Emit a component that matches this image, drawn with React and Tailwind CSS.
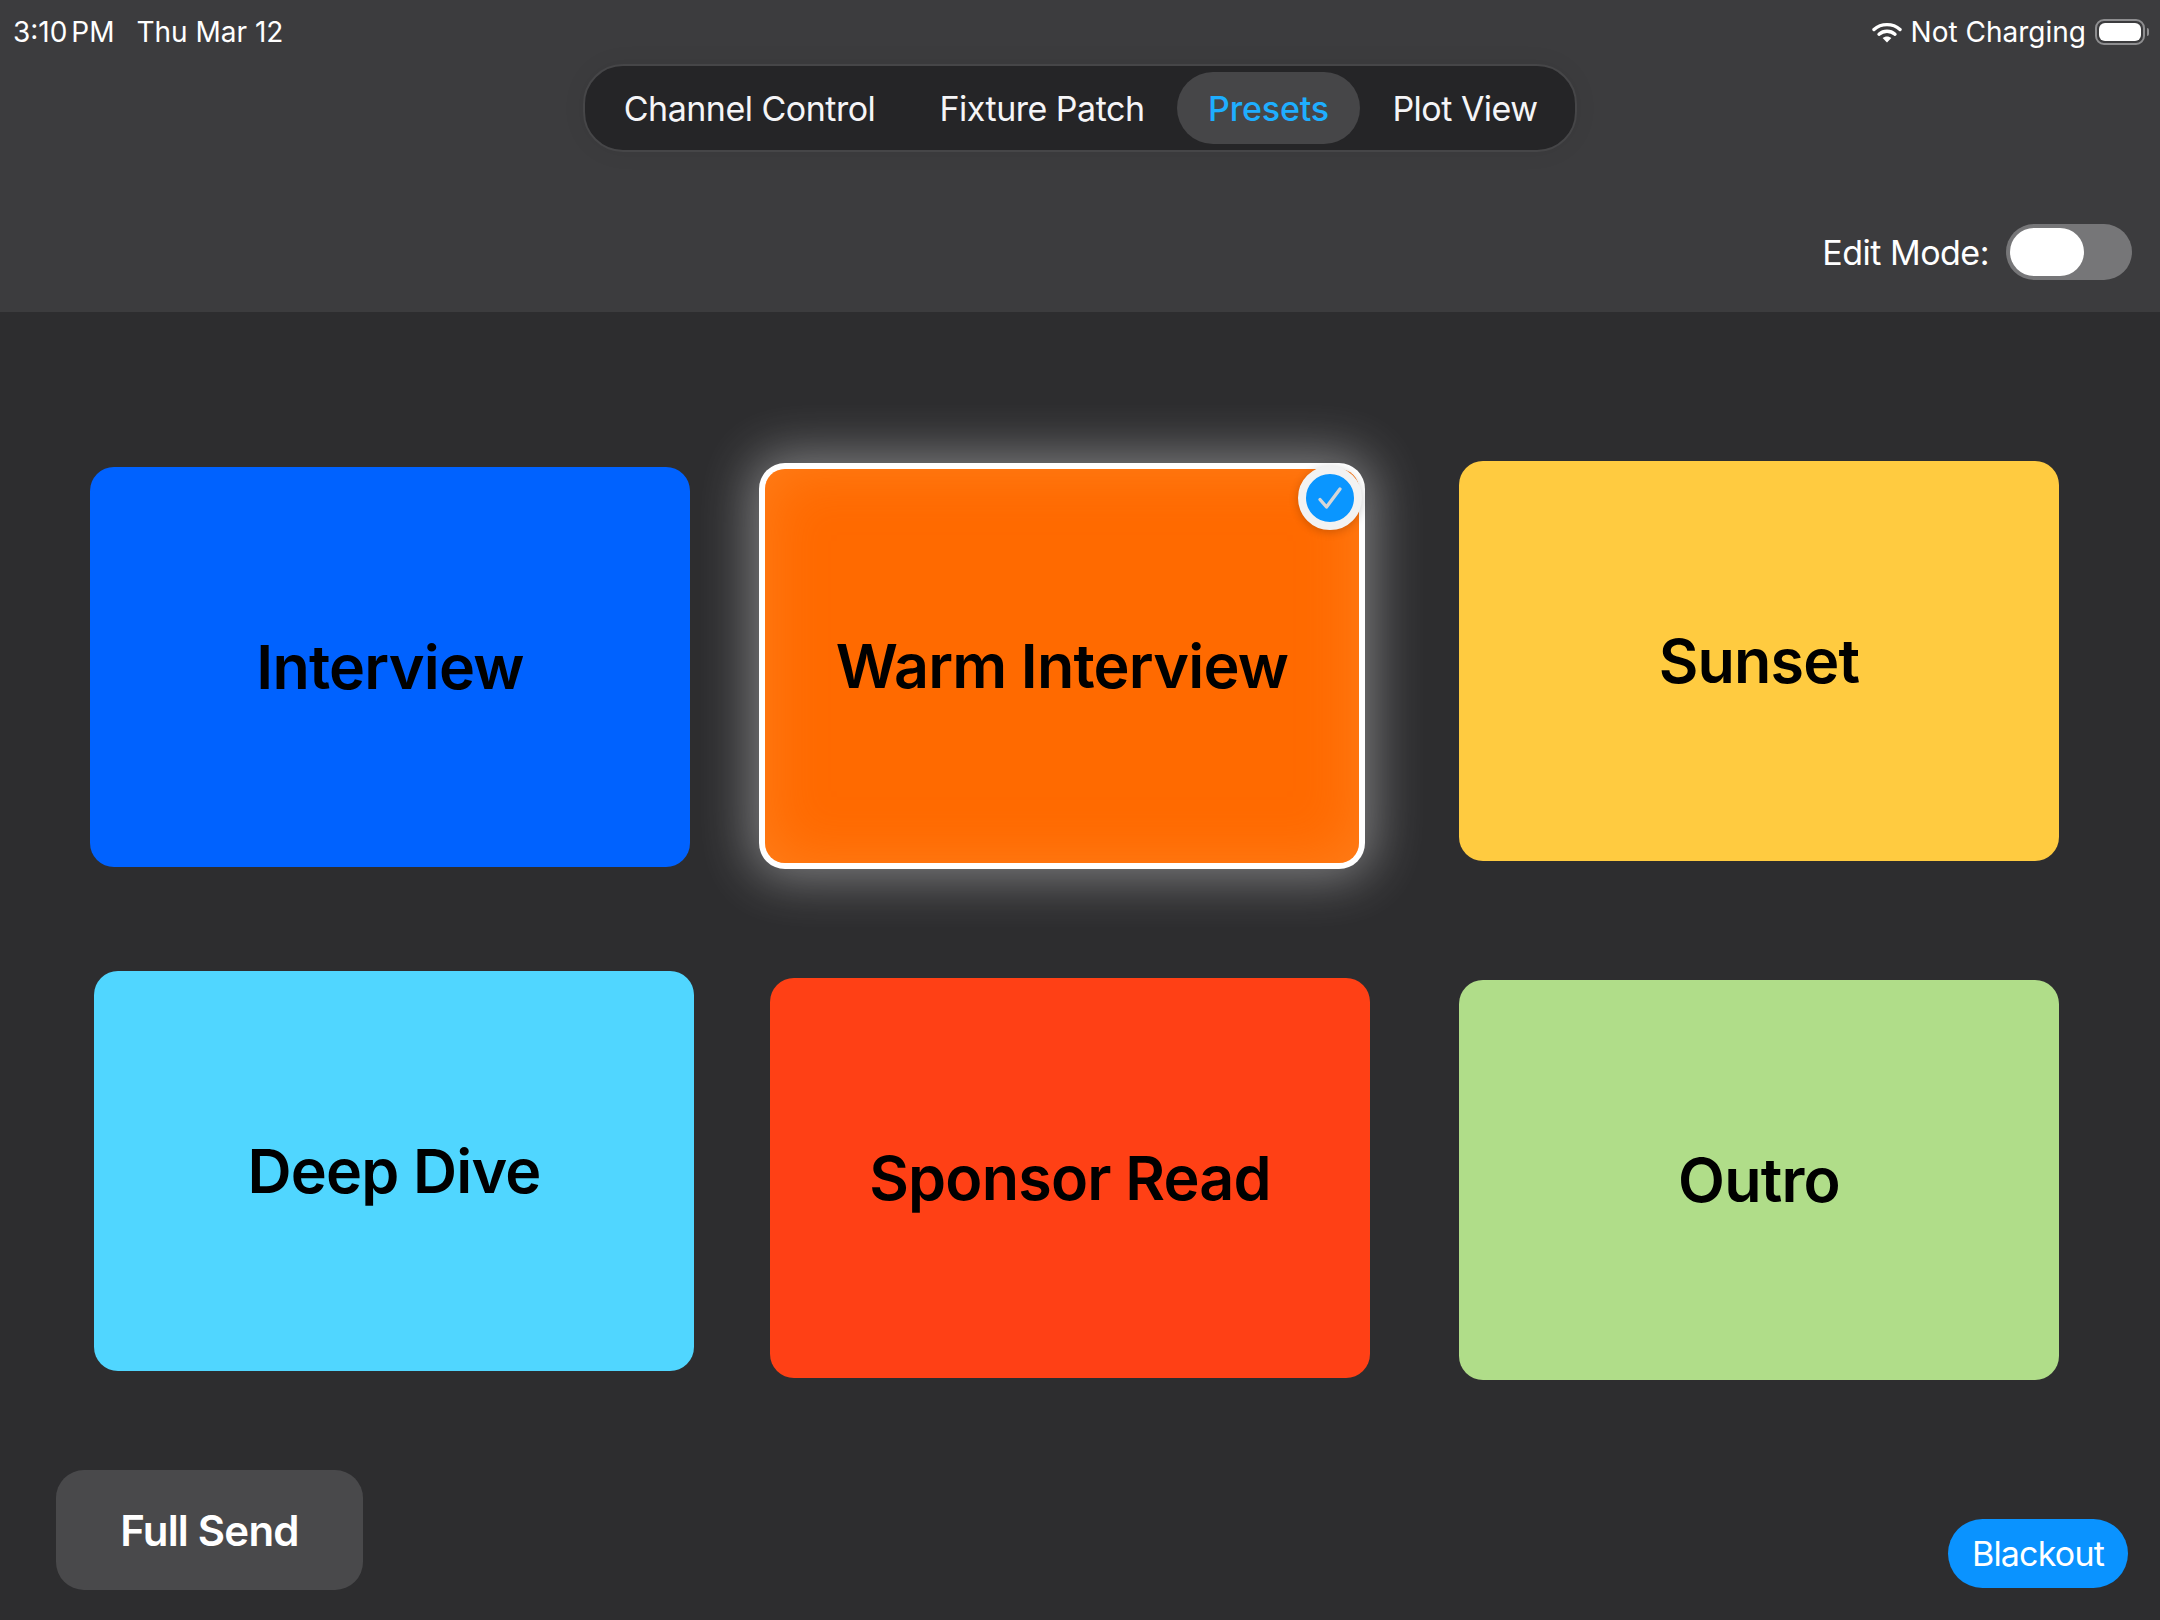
import React from "react";

const font = { fontFamily: '"Inter", "Liberation Sans", sans-serif' };

function Wifi() {
  return (
    <svg width="30" height="21" viewBox="0 0 30 21" fill="none" className="shrink-0">
      <path d="M2 7.5C9.2 1 20.8 1 28 7.5" stroke="white" strokeWidth="3.4" strokeLinecap="round" />
      <path d="M7 12.2C11.6 8.2 18.4 8.2 23 12.2" stroke="white" strokeWidth="3.4" strokeLinecap="round" />
      <path d="M10.6 16C13 13.9 17 13.9 19.4 16L15 20.6Z" fill="white" />
    </svg>
  );
}

function Battery() {
  return (
    <div className="flex items-center shrink-0">
      <div className="w-[50px] h-[26px] rounded-[9px] border-2 border-[#8e8e90] p-[2px]">
        <div className="w-full h-full rounded-[6px] bg-white" />
      </div>
      <div className="ml-[2px] w-[2px] h-[8px] rounded-r-full bg-[#8e8e90]" />
    </div>
  );
}

function Tab({ label, width, active }) {
  return (
    <div
      className={`flex items-center justify-center h-[72px] ${width} text-[34px] ${
        active ? "rounded-[36px] bg-[#464648] text-[#1eaeff] font-medium tracking-[-0.2px]" : "text-[#f5f5f7] tracking-[-0.5px]"
      }`}
    >
      {label}
    </div>
  );
}

function Preset({ label, color, offset }) {
  return (
    <div className={`flex items-center justify-center w-[600px] h-[400px] pt-[2px] rounded-[24px] ${color} ${offset}`}>
      <span className="text-[61px] font-semibold text-black tracking-[-0.8px]">{label}</span>
    </div>
  );
}

export default function App() {
  return (
    <div style={font} className="flex flex-col w-[2160px] h-[1620px] bg-[#2d2d2f] overflow-hidden">
      <header className="h-[312px] shrink-0 bg-[#3c3c3e] text-white">
        <div className="flex items-center justify-between h-[64px] pl-[13px] pr-[11px] text-[28px]">
          <div className="flex gap-[22px]">
            <span className="[word-spacing:-4px]">3:10 PM</span>
            <span>Thu Mar 12</span>
          </div>
          <div className="flex items-center">
            <Wifi />
            <span className="ml-[9px] mr-[9px]">Not Charging</span>
            <Battery />
          </div>
        </div>
        <div className="flex justify-center">
          <nav className="flex items-center w-[994px] h-[88px] pl-[7px] pr-[5px] rounded-[40px] bg-[#252527] border-2 border-[#464648] shadow-[0_0_24px_rgba(0,0,0,0.06)]">
            <Tab label="Channel Control" width="w-[315px]" />
            <Tab label="Fixture Patch" width="w-[270px]" />
            <Tab label="Presets" width="w-[183px]" active />
            <Tab label="Plot View" width="w-[210px]" />
          </nav>
        </div>
        <div className="flex items-center justify-end gap-[17px] mt-[72px] pr-[28px]">
          <span className="text-[34px] tracking-[-0.5px]">Edit Mode:</span>
          <div className="flex items-center w-[126px] h-[56px] rounded-full bg-[#767678] p-[4px]">
            <div className="w-[74px] h-[48px] rounded-full bg-white" />
          </div>
        </div>
      </header>

      <main className="flex flex-1 flex-col">
        <div className="grid grid-cols-[675px_694px_600px] grid-rows-[510px_auto] pl-[90px] pt-[149px]">
          <Preset label="Interview" color="bg-[#0062ff]" offset="mt-[6px]" />
          <div className="relative flex items-center justify-center w-[594px] h-[394px] pt-[2px] mt-[8px] rounded-[20px] bg-[#ff6a00] shadow-[0_0_0_6px_#ffffff,0_0_52px_14px_rgba(255,255,255,0.4),inset_0_0_60px_rgba(255,160,70,0.4)]">
            <span className="text-[61px] font-semibold text-black tracking-[-0.8px]">Warm Interview</span>
            <div className="absolute -top-[3px] -right-[3px] flex items-center justify-center w-[64px] h-[64px] rounded-full border-8 border-[#f2f2f2] bg-[#0a96ff] shadow-[0_2px_10px_rgba(0,0,0,0.2)]">
              <svg width="26" height="24" viewBox="0 0 26 24" fill="none">
                <path d="M3 13.5L9.5 21L23 3" stroke="#d6d6d6" strokeWidth="3.4" strokeLinecap="round" strokeLinejoin="round" />
              </svg>
            </div>
          </div>
          <Preset label="Sunset" color="bg-[#ffcb40]" />
          <Preset label="Deep Dive" color="bg-[#50d6ff]" offset="ml-[4px]" />
          <Preset label="Sponsor Read" color="bg-[#ff4015]" offset="ml-[5px] mt-[7px]" />
          <Preset label="Outro" color="bg-[#b0dd89]" offset="mt-[9px]" />
        </div>

        <div className="flex items-end justify-between mt-auto pl-[56px] pr-[32px] pb-[30px]">
          <div className="flex items-center justify-center w-[307px] h-[120px] rounded-[28px] bg-[#49494b] text-white text-[42px] font-semibold tracking-[-0.8px]">
            Full Send
          </div>
          <div className="flex items-center justify-center w-[180px] h-[69px] mb-[2px] rounded-full bg-[#0a93ff] text-white text-[34px] tracking-[-0.8px]">
            Blackout
          </div>
        </div>
      </main>
    </div>
  );
}
